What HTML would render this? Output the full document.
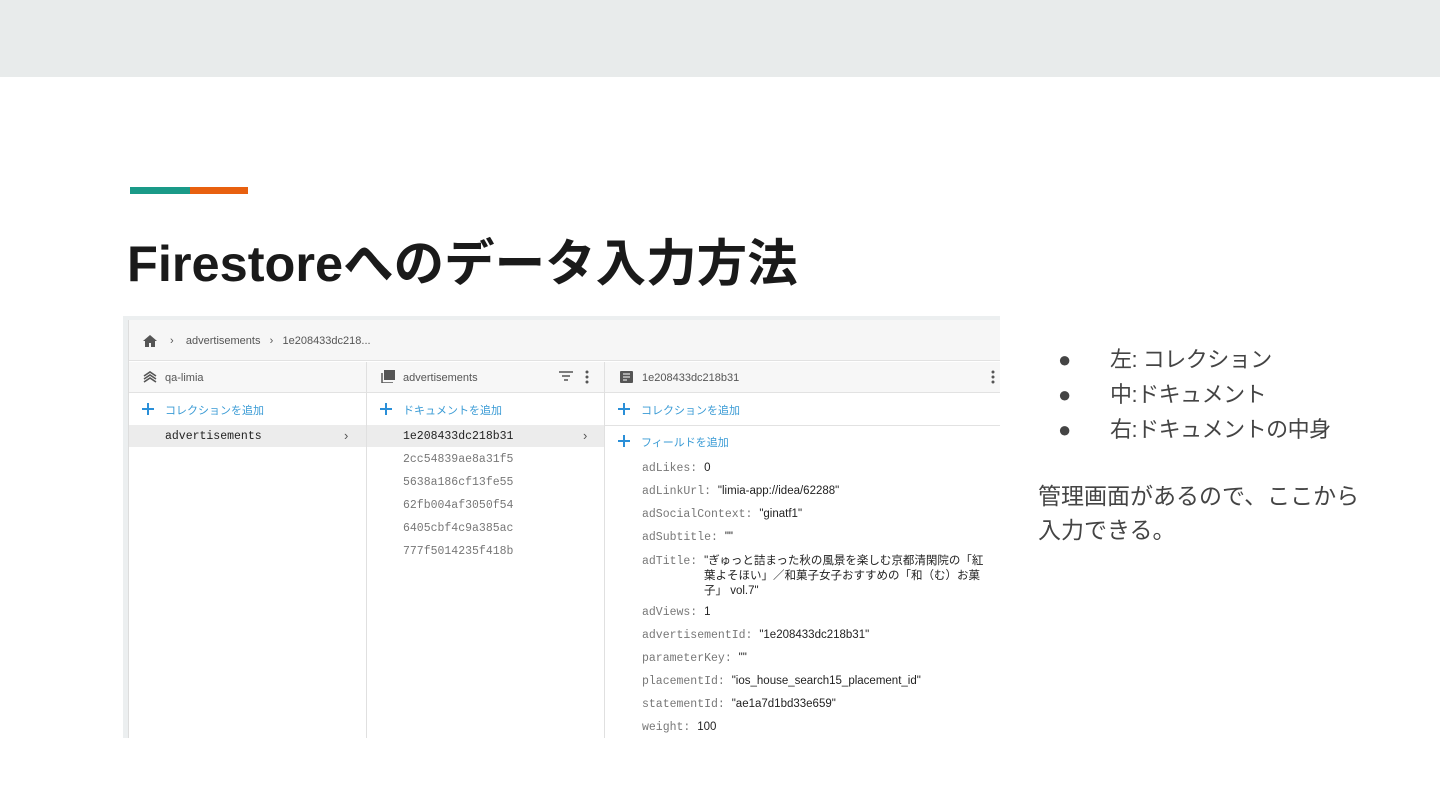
<!DOCTYPE html>
<html><head><meta charset="utf-8"><style>
*{margin:0;padding:0;box-sizing:border-box}
body{width:1440px;height:810px;background:#fff;position:relative;overflow:hidden;font-family:"Liberation Sans","Noto Sans CJK JP",sans-serif}
.a{position:absolute;white-space:nowrap}
.m{font-family:"Liberation Mono","Noto Sans CJK JP",monospace;font-size:11.5px;color:#777}
.s{font-size:11px;color:#555}
.b{color:#3a9bd5;font-size:11px}
.v{color:#222;font-family:"Liberation Sans","Noto Sans CJK JP",sans-serif}
.plus{width:12px;height:12px}
</style></head><body>
<div class="a" style="left:0;top:0;width:1440px;height:77px;background:#e8ebeb"></div>
<div class="a" style="left:130px;top:187px;width:60px;height:7px;background:#1a9a88"></div>
<div class="a" style="left:190px;top:187px;width:58px;height:7px;background:#e8600f"></div>
<div class="a" style="left:127px;top:222px;font-size:50.5px;font-weight:bold;color:#1a1a1a;letter-spacing:0px">Firestoreへのデータ入力方法</div>

<div class="a" style="left:123px;top:316px;width:877px;height:422px;background:#eceff0"></div>
<div class="a" style="left:128px;top:320px;width:872px;height:418px;background:#fff;border-left:1px solid #ddd"></div>
<div class="a" style="left:129px;top:320px;width:871px;height:41px;background:#f6f6f6;border-bottom:1px solid #e2e2e2"></div>
<div class="a" style="left:129px;top:362px;width:871px;height:31px;background:#f7f7f7;border-bottom:1px solid #e2e2e2"></div>
<div class="a" style="left:366px;top:362px;width:1px;height:376px;background:#e0e0e0"></div>
<div class="a" style="left:604px;top:362px;width:1px;height:376px;background:#e0e0e0"></div>
<div class="a" style="left:129px;top:425px;width:237px;height:22px;background:#ececec"></div>
<div class="a" style="left:367px;top:425px;width:237px;height:22px;background:#ececec"></div>
<div class="a" style="left:605px;top:425px;width:395px;height:1px;background:#e2e2e2"></div>

<svg class="a" style="left:142px;top:334px" width="16" height="14" viewBox="0 0 16 14"><path d="M8 1L1 7h2v6h4V9h2v4h4V7h2z" fill="#555"/></svg>
<div class="a s" style="left:170px;top:335px">›&nbsp;&nbsp;&nbsp; advertisements &nbsp;&nbsp;›&nbsp;&nbsp; 1e208433dc218...</div>

<svg class="a" style="left:143px;top:371px" width="14" height="12" viewBox="0 0 14 12"><path d="M1 5l6-4 6 4M1 8l6-4 6 4M1 11l6-4 6 4" stroke="#555" stroke-width="1.6" fill="none"/></svg>
<div class="a s" style="left:165px;top:372px">qa-limia</div>
<svg class="a" style="left:381px;top:370px" width="14" height="13"><rect x="3" y="0" width="11" height="10" fill="#555"/><path d="M1 3v10h11" stroke="#555" stroke-width="1.5" fill="none"/></svg>
<div class="a s" style="left:403px;top:372px">advertisements</div>
<svg class="a" style="left:559px;top:371px" width="14" height="10"><path d="M0 1h14M3 5h8M5 9h4" stroke="#555" stroke-width="1.6"/></svg>
<svg class="a" style="left:585px;top:370px" width="4" height="14"><circle cx="2" cy="2" r="1.5" fill="#555"/><circle cx="2" cy="7" r="1.5" fill="#555"/><circle cx="2" cy="12" r="1.5" fill="#555"/></svg>
<svg class="a" style="left:620px;top:371px" width="13" height="12"><rect width="13" height="12" rx="1" fill="#555"/><path d="M3 3h7M3 6h7M3 9h4" stroke="#fff"/></svg>
<div class="a s" style="left:642px;top:372px">1e208433dc218b31</div>
<svg class="a" style="left:991px;top:370px" width="4" height="14"><circle cx="2" cy="2" r="1.5" fill="#555"/><circle cx="2" cy="7" r="1.5" fill="#555"/><circle cx="2" cy="12" r="1.5" fill="#555"/></svg>

<svg class="a plus" style="left:142px;top:403px"><path d="M6 0v12M0 6h12" stroke="#2a8fd8" stroke-width="2"/></svg><div class="a b" style="left:165px;top:402px">コレクションを追加</div>
<svg class="a plus" style="left:380px;top:403px"><path d="M6 0v12M0 6h12" stroke="#2a8fd8" stroke-width="2"/></svg><div class="a b" style="left:403px;top:402px">ドキュメントを追加</div>
<svg class="a plus" style="left:618px;top:403px"><path d="M6 0v12M0 6h12" stroke="#2a8fd8" stroke-width="2"/></svg><div class="a b" style="left:641px;top:402px">コレクションを追加</div>
<svg class="a plus" style="left:618px;top:435px"><path d="M6 0v12M0 6h12" stroke="#2a8fd8" stroke-width="2"/></svg><div class="a b" style="left:641px;top:434px">フィールドを追加</div>

<div class="a m" style="left:165px;top:430px;color:#222">advertisements</div><div class="a s" style="left:344px;top:428px;font-size:13px">›</div>
<div class="a m" style="left:403px;top:430px;color:#222">1e208433dc218b31</div><div class="a s" style="left:583px;top:428px;font-size:13px">›</div>
<div class="a m" style="left:403px;top:453px">2cc54839ae8a31f5</div>
<div class="a m" style="left:403px;top:476px">5638a186cf13fe55</div>
<div class="a m" style="left:403px;top:499px">62fb004af3050f54</div>
<div class="a m" style="left:403px;top:522px">6405cbf4c9a385ac</div>
<div class="a m" style="left:403px;top:545px">777f5014235f418b</div>

<div class="a m" style="left:642px;top:462px">adLikes: <span class="v">0</span></div>
<div class="a m" style="left:642px;top:485px">adLinkUrl: <span class="v">"limia-app://idea/62288"</span></div>
<div class="a m" style="left:642px;top:508px">adSocialContext: <span class="v">"ginatf1"</span></div>
<div class="a m" style="left:642px;top:531px">adSubtitle: <span class="v">""</span></div>
<div class="a m" style="left:642px;top:554px;line-height:15px">adTitle: <span class="v">"ぎゅっと詰まった秋の風景を楽しむ京都清閑院の「紅</span></div>
<div class="a m v" style="left:704px;top:569px;line-height:15px;font-size:11.5px;color:#222">葉よそほい」／和菓子女子おすすめの「和（む）お菓<br>子」 vol.7"</div>
<div class="a m" style="left:642px;top:606px">adViews: <span class="v">1</span></div>
<div class="a m" style="left:642px;top:629px">advertisementId: <span class="v">"1e208433dc218b31"</span></div>
<div class="a m" style="left:642px;top:652px">parameterKey: <span class="v">""</span></div>
<div class="a m" style="left:642px;top:675px">placementId: <span class="v">"ios_house_search15_placement_id"</span></div>
<div class="a m" style="left:642px;top:698px">statementId: <span class="v">"ae1a7d1bd33e659"</span></div>
<div class="a m" style="left:642px;top:721px">weight: <span class="v">100</span></div>

<div class="a" style="left:1058px;top:342px;font-size:22px;color:#444;line-height:35px">●<br>●<br>●</div>
<div class="a" style="left:1110px;top:342px;font-size:22px;color:#444;line-height:35px;letter-spacing:-0.5px">左: コレクション<br>中:ドキュメント<br>右:ドキュメントの中身</div>
<div class="a" style="left:1038px;top:479px;font-size:23px;color:#444;line-height:34px">管理画面があるので、ここから<br>入力できる。</div>
</body></html>
